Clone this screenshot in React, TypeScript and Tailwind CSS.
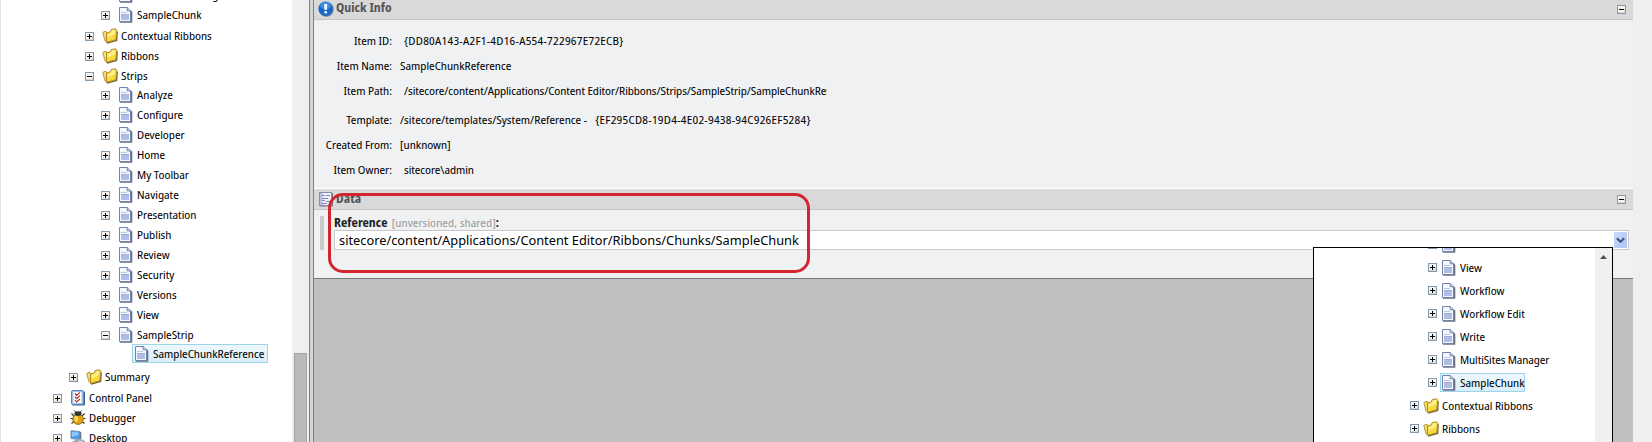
import type { ReactNode } from 'react';

type IconName = 'doc' | 'folder' | 'panel' | 'bug' | 'desktop';

function Toggle({ open = false }: { open?: boolean }) {
  return (
    <svg width="9" height="9" viewBox="0 0 9 9" className="shrink-0" shapeRendering="crispEdges">
      <rect x="0.5" y="0.5" width="8" height="8" fill="#f6f5f0" stroke="#8399ad" />
      <path d="M1 7.5H8M7.5 4V8" stroke="#dad8cd" fill="none" />
      <path d={open ? 'M2 4.5H7' : 'M2 4.5H7M4.5 2V7'} stroke="#000" fill="none" />
    </svg>
  );
}

function DocIcon() {
  return (
    <svg width="16" height="16" viewBox="0 0 16 16" className="shrink-0">
      <path d="M2 2.5H12L14.3 4.8V15.8H2Z" fill="#687086" />
      <path d="M1.5 0.5H9.2L12.5 3.8V14.5H1.5Z" fill="#f4f7fd" stroke="#7382a8" />
      <path d="M9.2 0.5V3.8H12.5" fill="#cfd8ec" stroke="#7382a8" />
      <path d="M3 5.5H9" stroke="#bac5e0" />
      <rect x="3" y="7" width="8" height="6" fill="#afbfe4" />
      <path d="M3 7.5H11" stroke="#9dadd8" />
    </svg>
  );
}

function FolderIcon() {
  return (
    <svg width="16" height="16" viewBox="0 0 16 16" className="shrink-0">
      <path d="M5 15 14.6 12.4 15.2 3.5" fill="none" stroke="#75633a" strokeWidth="1.4" />
      <path d="M0.8 4.4 3 3.3 4.8 4V14.5L2.8 12.4Z" fill="#f4dc70" stroke="#a8851c" strokeWidth="0.8" />
      <path d="M4.6 5 8.2 3.9 9.2 1.6 13.6 0.8 14.7 2.4 13.8 11.7 4.4 14.4Z" fill="#f8da3c" stroke="#a8851c" strokeWidth="0.9" />
      <path d="M5.5 6 9 4.9 10 2.6 13.3 2 12.9 6 5.3 9.5Z" fill="#fdf08f" />
    </svg>
  );
}

function PanelIcon() {
  return (
    <svg width="16" height="16" viewBox="0 0 16 16" className="shrink-0">
      <rect x="2" y="1.5" width="13" height="14" rx="1" fill="#415f86" />
      <rect x="1.5" y="0.5" width="12" height="14" rx="1" fill="#9cc3ea" stroke="#5686bb" />
      <rect x="3.5" y="2" width="8" height="11" fill="#fff" />
      <path d="M5 3.4 6.6 5.4 10 2.4M5 6.6 6.6 8.6 10 5.6M5 10 6.6 12 10 9" fill="none" stroke="#b3232c" strokeWidth="1.1" />
    </svg>
  );
}

function BugIcon() {
  return (
    <svg width="16" height="16" viewBox="0 0 16 16" className="shrink-0">
      <path d="M4 6 1.5 3.5M3 8.5H0.5M4 11.5 1.5 13.5M12 6 14.5 3.5M13 8.5H15.5M12 11.5 14.5 13.5" stroke="#4a3e22" strokeWidth="1.2" fill="none" />
      <ellipse cx="8" cy="9.2" rx="5.3" ry="5.2" fill="#dfa314" stroke="#80601a" strokeWidth="0.8" />
      <ellipse cx="6.3" cy="8.8" rx="1.8" ry="3" fill="#ffdc55" />
      <ellipse cx="8" cy="3.6" rx="3.6" ry="2.4" fill="#333" />
      <path d="M5.5 1.8 4.5 0.5M10.5 1.8 11.5 0.5" stroke="#333" />
    </svg>
  );
}

function DesktopIcon() {
  return (
    <svg width="16" height="16" viewBox="0 0 16 16" className="shrink-0">
      <path d="M1 0.8 9.5 1.4V9.4L1 8.6Z" fill="#4d9de6" stroke="#7990ad" />
      <path d="M2 2 8.5 2.3V5L2 6.8Z" fill="#8ccafa" />
      <path d="M9.8 1.5 11.3 2.6V9.5L9.8 9.6Z" fill="#65748a" />
      <path d="M4.5 9H7L9.5 12H4Z" fill="#a8b3c3" />
      <path d="M2 12.2 11 10.5 14.5 13.5 5 15.5Z" fill="#dde3eb" stroke="#77869b" strokeWidth="0.8" />
      <path d="M12 9.5 14.5 12" stroke="#555f70" />
    </svg>
  );
}

function Icon({ name }: { name: IconName }) {
  switch (name) {
    case 'folder':
      return <FolderIcon />;
    case 'panel':
      return <PanelIcon />;
    case 'bug':
      return <BugIcon />;
    case 'desktop':
      return <DesktopIcon />;
    default:
      return <DocIcon />;
  }
}

type Row = { label: string; icon: IconName; pad: string; open?: boolean; leaf?: boolean };

const doc = (label: string, extra: Partial<Row> = {}): Row => ({ label, icon: 'doc', pad: 'pl-[100px] h-5', ...extra });

const treeRows: Row[] = [
  doc('MultiSites Manager'),
  doc('SampleChunk'),
  { label: 'Contextual Ribbons', icon: 'folder', pad: 'pl-[84px] h-5 mt-px' },
  { label: 'Ribbons', icon: 'folder', pad: 'pl-[84px] h-5' },
  { label: 'Strips', icon: 'folder', pad: 'pl-[84px] h-5', open: true },
  doc('Analyze', { pad: 'pl-[100px] h-5 -mt-px' }),
  doc('Configure'),
  doc('Developer'),
  doc('Home'),
  doc('My Toolbar', { leaf: true }),
  doc('Navigate'),
  doc('Presentation'),
  doc('Publish'),
  doc('Review'),
  doc('Security'),
  doc('Versions'),
  doc('View'),
  doc('SampleStrip', { open: true }),
];

const lowerRows: Row[] = [
  { label: 'Summary', icon: 'folder', pad: 'pl-[68px] h-5 mt-[4px]' },
  { label: 'Control Panel', icon: 'panel', pad: 'pl-[52px] h-5 mt-px' },
  { label: 'Debugger', icon: 'bug', pad: 'pl-[52px] h-5' },
  { label: 'Desktop', icon: 'desktop', pad: 'pl-[52px] h-5' },
];

function TreeRow({ row }: { row: Row }) {
  return (
    <div className={`flex shrink-0 items-center ${row.pad}`}>
      {row.leaf ? <span className="w-[9px]" /> : <Toggle open={row.open} />}
      <span className="ml-[8px] flex">
        <Icon name={row.icon} />
      </span>
      <span className="ml-[3px]">{row.label}</span>
    </div>
  );
}

const popupRows: Row[] = [
  doc('', { pad: 'pl-[114px]' }),
  doc('View', { pad: 'pl-[114px]' }),
  doc('Workflow', { pad: 'pl-[114px]' }),
  doc('Workflow Edit', { pad: 'pl-[114px]' }),
  doc('Write', { pad: 'pl-[114px]' }),
  doc('MultiSites Manager', { pad: 'pl-[114px] tracking-[-0.1px]' }),
];

function PopupRow({ row }: { row: Row }) {
  return (
    <div className={`flex h-[23px] shrink-0 items-center ${row.pad}`}>
      <Toggle />
      <span className="ml-[4px] flex">
        <Icon name={row.icon} />
      </span>
      <span className="ml-[3px]">{row.label}</span>
    </div>
  );
}

function SectionHeader({ icon, title, lift = '' }: { icon: ReactNode; title: string; lift?: string }) {
  return (
    <div className="flex h-[21px] shrink-0 items-center border-b border-[#c6c6c6] bg-[#d9d9d9] pr-[7px] pl-[4px]">
      {icon}
      <span className={`ml-[2px] flex-1 text-[12px] font-bold tracking-[0.05px] text-[#545454] ${lift}`}>{title}</span>
      <Toggle open />
    </div>
  );
}

function Field({ label, height, children }: { label: string; height: string; children: ReactNode }) {
  return (
    <div className={`flex items-center ${height}`}>
      <span className="w-[78px] shrink-0 text-right">{label}</span>
      {children}
    </div>
  );
}

export default function App() {
  return (
    <div className="relative flex h-[442px] w-[1652px] overflow-hidden bg-[#efefef] [font-family:'Noto_Sans_Display','Noto_Sans',sans-serif] text-[11.5px] leading-4 whitespace-nowrap text-black [font-stretch:87.5%]">
      <aside className="flex h-full w-[309px] shrink-0 border-l border-[#e4e4e4]">
        <div className="flex w-[291px] flex-col overflow-hidden bg-white">
          <div className="-mt-[15px] flex flex-col">
            {treeRows.map((row) => (
              <TreeRow key={row.label} row={row} />
            ))}
            <div className="mt-[-1px] ml-[131px] flex h-[19px] w-[136px] items-center border border-[#9bd5ea] bg-linear-to-b from-[#eef8fd] to-[#d9effa] pl-px">
              <DocIcon />
              <span className="ml-[3px]">SampleChunkReference</span>
            </div>
            {lowerRows.map((row) => (
              <TreeRow key={row.label} row={row} />
            ))}
          </div>
        </div>
        <div className="flex flex-1 justify-center bg-[#efefef] pt-[353px]">
          <div className="h-[95px] w-[13px] border border-[#a3a3a3] bg-[#bababa]" />
        </div>
      </aside>
      <div className="w-[5px] shrink-0 border-x border-[#7f7f7f] bg-[#d4d4d4]" />
      <main className="flex w-[1319px] shrink-0 flex-col bg-[#c0c0c0]">
        <section className="flex h-[279px] shrink-0 flex-col border-b border-[#787878] bg-[#eff1f3]">
          <div className="-mt-px">
            <SectionHeader
              title="Quick Info"
              lift="pb-[2px]"
              icon={
                <svg width="16" height="16" viewBox="0 0 16 16" className="shrink-0">
                  <circle cx="8.3" cy="8.5" r="7.3" fill="#6f7d93" />
                  <circle cx="7.6" cy="7.7" r="7.2" fill="#1768c8" />
                  <ellipse cx="7.6" cy="4.6" rx="5.4" ry="3.6" fill="#3a8de0" />
                  <path d="M6.2 3H9.2L8.8 9H6.6Z" fill="#fff" />
                  <circle cx="7.7" cy="11.3" r="1.4" fill="#fff" />
                </svg>
              }
            />
          </div>
          <div className="flex h-[168px] flex-col pt-[8px]">
            <Field label="Item ID:" height="h-[25px]">
              <span className="ml-[12px] tracking-[0.26px]">{'{DD80A143-A2F1-4D16-A554-722967E72ECB}'}</span>
            </Field>
            <Field label="Item Name:" height="h-[25px]">
              <span className="ml-[8px]">SampleChunkReference</span>
            </Field>
            <Field label="Item Path:" height="h-[25px]">
              <span className="ml-[12px] w-[423px] overflow-hidden tracking-[-0.06px]">
                /sitecore/content/Applications/Content Editor/Ribbons/Strips/SampleStrip/SampleChunkReference
              </span>
            </Field>
            <Field label="Template:" height="h-[33px]">
              <span className="ml-[8px] tracking-[0.03px]">/sitecore/templates/System/Reference -</span>
              <span className="ml-[8px] tracking-[0.27px]">{'{EF295CD8-19D4-4E02-9438-94C926EF5284}'}</span>
            </Field>
            <Field label="Created From:" height="h-[17px]">
              <span className="ml-[8px]">[unknown]</span>
            </Field>
            <Field label="Item Owner:" height="h-[33px]">
              <span className="ml-[12px] tracking-[-0.05px]">sitecore\admin</span>
            </Field>
          </div>
          <div className="h-px shrink-0 bg-white" />
          <SectionHeader
            title="Data"
            icon={
              <svg width="16" height="16" viewBox="0 0 16 16" className="shrink-0">
                <path d="M2 2H15V15.5H2Z" fill="#77778c" />
                <rect x="1.5" y="1.5" width="12" height="13" fill="#eef0fb" stroke="#8b8bb0" />
                <path d="M2 2H4.5V14H2Z" fill="#b9bbdf" />
                <path d="M4 4.5H7M8 4.5H12M4 7.5H10M4 9.5H7M8 10.5H12M4 12.5H9" stroke="#8286b5" />
              </svg>
            }
          />
          <div className="flex pt-[6px] pl-[6px]">
            <div className="h-[34px] w-[4px] bg-[#cbcbcb]" />
            <div className="ml-[10px] flex flex-col">
              <div className="flex h-[14px] items-center text-[12px]">
                <b className="tracking-[0.05px] text-[#222]">Reference</b>
                <span className="ml-[4px] text-[11.5px] tracking-[0.07px] text-[#999]">[unversioned, shared]</span>
                <b className="text-[#222]">:</b>
              </div>
              <div className="flex h-[20px] w-[1295px] items-center border border-[#c9c9c9] bg-white pr-[1px] pl-[4px]">
                <span className="flex-1 [font-family:'Noto_Sans',sans-serif] text-[12.8px]">
                  sitecore/content/Applications/Content Editor/Ribbons/Chunks/SampleChunk
                </span>
                <span className="flex h-4 w-[13px] items-center justify-center rounded-[1px] bg-linear-to-br from-[#cbdafc] to-[#adc3f5]">
                  <svg width="9" height="7" viewBox="0 0 9 7">
                    <path d="M0.8 1.2 4.5 4.8 8.2 1.2" fill="none" stroke="#40547e" strokeWidth="2.1" />
                  </svg>
                </span>
              </div>
            </div>
          </div>
        </section>
      </main>

      <div className="absolute top-[193px] left-[328px] h-[80px] w-[482px] rounded-[15px] border-[3px] border-[#d3252d]" />

      <div className="absolute top-[247px] left-[1313px] flex h-[200px] w-[300px] border border-black bg-white">
        <div className="flex flex-1 flex-col overflow-hidden">
          <div className="-mt-[15px] flex flex-col">
            {popupRows.map((row) => (
              <PopupRow key={row.label} row={row} />
            ))}
            <div className="flex h-[23px] items-center pl-[114px]">
              <Toggle />
              <span className="ml-[3px] flex h-[19px] w-[85px] items-center border border-[#9bd5ea] bg-linear-to-b from-[#eef8fd] to-[#d9effa]">
                <DocIcon />
                <span className="ml-[3px]">SampleChunk</span>
              </span>
            </div>
            <PopupRow row={{ label: 'Contextual Ribbons', icon: 'folder', pad: 'pl-[96px]' }} />
            <PopupRow row={{ label: 'Ribbons', icon: 'folder', pad: 'pl-[96px]' }} />
          </div>
        </div>
        <div className="flex w-[17px] justify-center bg-[#f0f0f0] pt-[7px]">
          <svg width="7" height="4" viewBox="0 0 7 4">
            <path d="M0 4 3.5 0 7 4Z" fill="#505050" />
          </svg>
        </div>
      </div>
    </div>
  );
}
